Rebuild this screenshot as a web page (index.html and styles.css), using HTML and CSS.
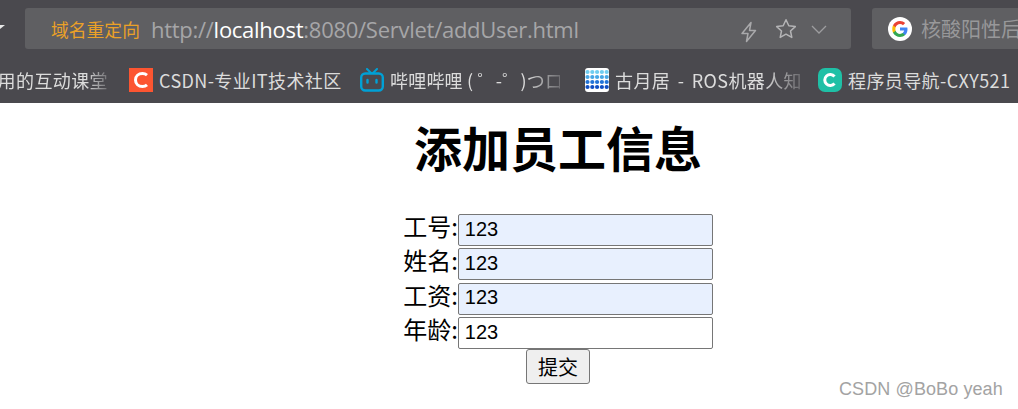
FILE: index.html
```html
<!DOCTYPE html>
<html lang="zh-CN">
<head>
<meta charset="utf-8">
<title>添加员工信息</title>
<link rel="stylesheet" href="styles.css">
</head>
<body>
<header class="chrome">
  <div class="toolbar">
    <svg class="menu-caret" width="6" height="6" viewBox="0 0 6 6"><path d="M0 1h6L1 5z" fill="#e8e8e8"/></svg>
    <div class="address">
      <span class="redirect">域名重定向</span>
      <span class="url">http://<b>localhost</b>:8080/Servlet/addUser.html</span>
      <svg class="addr-icon bolt" width="18" height="22" viewBox="0 0 18 22"><path d="M11 1.500 2 12.500h6l-1.500 8 9-11h-6z" fill="none" stroke="#a9a9ab" stroke-width="1.500" stroke-linejoin="round"/></svg>
      <svg class="addr-icon star" width="22" height="21" viewBox="0 0 22 21"><path d="M11 1.800l2.800 6 6.500.8-4.800 4.400 1.300 6.400-5.800-3.200-5.800 3.200 1.300-6.400L1.700 8.600l6.500-.8z" fill="none" stroke="#b4b4b6" stroke-width="1.500" stroke-linejoin="round"/></svg>
      <svg class="addr-icon chev" width="16" height="9" viewBox="0 0 16 9"><path d="M1 1l7 7 7-7" fill="none" stroke="#9d9d9f" stroke-width="1.300"/></svg>
    </div>
    <div class="search">
      <svg class="g-logo" width="24" height="24" viewBox="0 0 24 24">
        <circle cx="12" cy="12" r="12" fill="#fff"/>
        <path d="M19.500 12.200c0-.6-.1-1.100-.2-1.600H12v3h4.200c-.2 1-.7 1.800-1.500 2.400v2h2.500c1.500-1.300 2.300-3.300 2.300-5.800z" fill="#4285f4"/>
        <path d="M12 20c2.100 0 3.800-.7 5.200-1.900l-2.500-2c-.7.500-1.600.8-2.700.8-2 0-3.800-1.400-4.400-3.200H5v2c1.300 2.600 4 4.300 7 4.300z" fill="#34a853"/>
        <path d="M7.600 13.700c-.3-1-.3-2.300 0-3.400v-2H5c-1 1.900-1 5.400 0 7.400z" fill="#fbbc05"/>
        <path d="M12 7.100c1.200 0 2.200.4 3 1.200l2.200-2.200C15.800 4.800 14 4 12 4 9 4 6.300 5.700 5 8.300l2.600 2c.6-1.800 2.400-3.200 4.400-3.200z" fill="#ea4335"/>
      </svg>
      <span class="search-text">核酸阳性后</span>
    </div>
  </div>
  <nav class="bookmarks">
    <span class="mark first fade">常用的互动课堂</span>
    <span class="mark csdn">
      <svg width="24" height="24" viewBox="0 0 24 24"><rect width="24" height="24" fill="#fc5531"/><path d="M18 7.200A7 7 0 0 0 13.500 5.500C9.400 5.500 6.500 8.300 6.500 12s2.900 6.500 7 6.500c1.800 0 3.300-.6 4.500-1.700" fill="none" stroke="#fff" stroke-width="3"/></svg>
      <span>CSDN-专业IT技术社区</span>
    </span>
    <span class="mark bili">
      <svg width="24" height="24" viewBox="0 0 24 24"><path d="M7 1l4 4M17 1l-4 4" stroke="#00a1d6" stroke-width="2" stroke-linecap="round"/><rect x="1.200" y="5.500" width="21.600" height="17" rx="4" fill="none" stroke="#00a1d6" stroke-width="2.400"/><path d="M7.500 12v2.500M16.500 12v2.500" stroke="#00a1d6" stroke-width="2.400" stroke-linecap="round"/></svg>
      <span class="fade clip-bili">哔哩哔哩 ( ゜-゜)つロ</span>
    </span>
    <span class="mark guyue">
      <svg width="24" height="24" viewBox="0 0 24 24"><rect width="24" height="24" rx="3" fill="#fff"/><g fill="none" stroke-width="4.200" stroke-linecap="round" stroke-dasharray="0 4.800"><path d="M2.500 4H22" stroke="#6fcdf0"/><path d="M2.500 9H22" stroke="#46a7e6"/><path d="M2.500 14H22" stroke="#2274d8"/><path d="M2.500 19H22" stroke="#0f4fc4"/></g></svg>
      <span class="fade clip-gy">古月居 - ROS机器人知识</span>
    </span>
    <span class="mark cxy">
      <svg width="24" height="24" viewBox="0 0 24 24"><rect width="24" height="24" rx="7" fill="#1fc0a6"/><path d="M16.500 8.500A5.500 5.500 0 1 0 16.500 15.500" fill="none" stroke="#fff" stroke-width="3"/></svg>
      <span>程序员导航-CXY521</span>
    </span>
  </nav>
</header>
<main class="page">
  <h1 class="title">添加员工信息</h1>
  <form class="user-form">
    <div class="row"><label class="label">工号:</label><input class="field filled" value="123"></div>
    <div class="row"><label class="label">姓名:</label><input class="field filled" value="123"></div>
    <div class="row"><label class="label">工资:</label><input class="field filled" value="123"></div>
    <div class="row"><label class="label">年龄:</label><input class="field" value="123"></div>
    <button class="submit" type="button">提交</button>
  </form>
</main>
<div class="watermark">CSDN @BoBo yeah</div>
</body>
</html>
```
FILE: styles.css
```css
* { box-sizing: border-box; }
html, body { margin: 0; padding: 0; }
body {
  width: 1018px;
  height: 409px;
  overflow: hidden;
  background: #fff;
  position: relative;
  font-family: "Liberation Sans", "Noto Sans CJK SC", sans-serif;
}
.chrome {
  height: 103px;
  background: #4a494e;
  display: flex;
  flex-direction: column;
  overflow: hidden;
}
.toolbar {
  height: 58px;
  padding-top: 8px;
  display: flex;
  align-items: flex-start;
}
.menu-caret { margin: 16px 0 0 -1px; flex: none; }
.address {
  flex: none;
  width: 826px;
  height: 41px;
  margin-left: 20px;
  background: #5f5f62;
  border-radius: 3px;
  display: flex;
  align-items: center;
  position: relative;
}
.redirect {
  margin-left: 26px;
  font: 17.800px "Noto Sans CJK SC", sans-serif;
  color: #eba127;
  white-space: nowrap;
}
.url {
  margin-left: 11px;
  font: 22px "Open Sans", "Liberation Sans", sans-serif;
  letter-spacing: -.27px;
  color: #a6a6a8;
  white-space: nowrap;
}
.url b { font-weight: 400; color: #fff; }
.addr-icon { position: absolute; }
.bolt { left: 715px; top: 13px; }
.star { left: 750px; top: 10px; }
.chev { left: 786px; top: 17px; }
.search {
  flex: none;
  width: 160px;
  height: 41px;
  margin-left: 21px;
  background: #5f5f62;
  border-radius: 3px;
  display: flex;
  align-items: center;
  padding-left: 16px;
  gap: 9px;
  overflow: hidden;
}
.g-logo { flex: none; }
.search-text {
  font: 20px "Noto Sans CJK SC", sans-serif;
  color: #98989a;
  white-space: nowrap;
}
.bookmarks {
  height: 45px;
  padding-bottom: 2px;
  display: flex;
  align-items: center;
  white-space: nowrap;
  font: 18px "Noto Sans CJK SC", sans-serif;
  letter-spacing: .4px;
  color: #dcdcdc;
}
.mark {
  flex: none;
  display: flex;
  align-items: center;
  gap: 6px;
  overflow: hidden;
}
.mark svg { flex: none; }
.first { width: 110px; margin-left: -2px; justify-content: flex-end; }
.csdn { margin-left: 21px; width: 231px; }
.bili { width: 225px; }
.guyue { width: 233px; }
.cxy { width: 200px; }
.clip-bili { width: 170px; overflow: hidden; letter-spacing: .2px; }
.clip-gy { width: 185px; overflow: hidden; word-spacing: 3px; }
.fade {
  -webkit-mask-image: linear-gradient(90deg, #000 80%, rgba(0,0,0,.25));
  mask-image: linear-gradient(90deg, #000 80%, rgba(0,0,0,.25));
}
.page {
  padding-left: 98px;
  text-align: center;
}
.title {
  margin: 14px 0 39px;
  font: 700 48px/58px "Noto Sans CJK SC", sans-serif;
  color: #000;
}
.user-form {
  display: flex;
  flex-direction: column;
  align-items: center;
}
.row {
  height: 34.400px;
  display: flex;
  align-items: flex-start;
}
.label {
  font: 24px/24px "Noto Sans CJK SC", sans-serif;
  color: #000;
  white-space: nowrap;
}
.field {
  width: 255px;
  height: 32px;
  padding: 0 6px 2px;
  border: 1px solid #767676;
  border-radius: 2px;
  background: #fff;
  font: 20px "Liberation Sans", sans-serif;
  color: #000;
}
.filled { background: #e8f0fe; }
.submit {
  width: 64px;
  height: 35px;
  margin-top: -3px;
  padding: 0;
  border: 1px solid #767676;
  border-radius: 3px;
  background: #efefef;
  font: 20px "Noto Sans CJK SC", sans-serif;
  color: #000;
}
.watermark {
  position: absolute;
  left: 839px;
  top: 379px;
  font: 18px/20px "Liberation Sans", sans-serif;
  letter-spacing: .1px;
  color: #a3a3a3;
  white-space: nowrap;
}
```
